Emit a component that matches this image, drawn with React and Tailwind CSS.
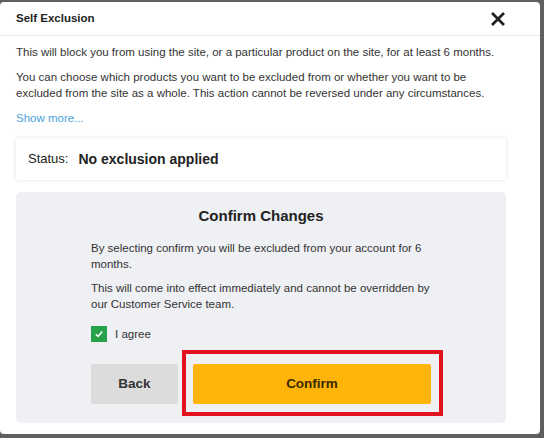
import React from "react";

export default function App() {
  return (
    <div className="w-[544px] h-[438px] bg-[#5f5f5f] pt-[2px] pr-[4px] pb-[4px] overflow-hidden" style={{ fontFamily: '"Liberation Sans", Arial, sans-serif' }}>
      <div className="h-full bg-white rounded-[4px] flex flex-col">
        <div className="h-[34px] flex items-center justify-between pl-4 pr-[34px] border-b border-[#e8e8e8] shrink-0">
          <span className="text-[11.5px] font-bold text-[#222]">Self Exclusion</span>
          <svg width="16" height="16" viewBox="0 0 16 16" className="text-[#222]">
            <path d="M2 2 L14 14 M14 2 L2 14" stroke="currentColor" strokeWidth="2.8" strokeLinecap="butt" />
          </svg>
        </div>
        <div className="px-4 pt-[8px] flex flex-col">
          <p className="text-[11.5px] leading-[16px] text-[#333]">This will block you from using the site, or a particular product on the site, for at least 6 months.</p>
          <p className="text-[11.5px] leading-[16px] text-[#333] mt-[9px] max-w-[472px]">You can choose which products you want to be excluded from or whether you want to be excluded from the site as a whole. This action cannot be reversed under any circumstances.</p>
          <a className="text-[11.5px] leading-[16px] text-[#4aa3e0] mt-[9px]">Show more...</a>
          <div className="mt-[12px] mr-[18px] bg-white shadow-[0_0_4px_rgba(0,0,0,0.12)] rounded-[3px] h-[42px] flex items-center pl-3 text-[#222]">
            <span className="text-[13px]">Status:</span>
            <span className="text-[14px] font-bold ml-[10px]">No exclusion applied</span>
          </div>
          <div className="mt-[12px] mr-[18px] bg-[#eff0f4] rounded-[5px] h-[231px] flex flex-col items-center pt-[14px]">
            <h2 className="text-[15px] font-bold text-[#222] leading-[20px]">Confirm Changes</h2>
            <div className="w-[340px] mt-[14px] text-[11.5px] leading-[16px] text-[#333]">
              <p className="mr-[-6px]">By selecting confirm you will be excluded from your account for 6 months.</p>
              <p className="mt-[8px] mr-[-6px]">This will come into effect immediately and cannot be overridden by our Customer Service team.</p>
              <div className="flex items-center mt-[14px]">
                <span className="w-[16px] h-[16px] bg-[#27a14a] flex items-center justify-center">
                  <svg width="10" height="10" viewBox="0 0 10 10">
                    <path d="M1.8 5.2 L4 7.4 L8.2 2.4" stroke="white" strokeWidth="1.6" fill="none" />
                  </svg>
                </span>
                <span className="ml-[8px]">I agree</span>
              </div>
              <div className="flex mt-[22px] gap-[15px]">
                <button className="w-[87px] h-[40px] bg-[#dcdcdc] rounded-[2px] text-[13.5px] font-bold text-[#333]">Back</button>
                <div className="relative flex-1">
                  <button className="w-full h-[40px] bg-[#ffb40a] rounded-[2px] text-[13.5px] font-bold text-[#3a2a00]">Confirm</button>
                  <div className="absolute left-[-11px] right-[-12px] top-[-14px] bottom-[-12px] border-[4px] border-[#e2131f]"></div>
                </div>
              </div>
            </div>
          </div>
        </div>
      </div>
    </div>
  );
}
